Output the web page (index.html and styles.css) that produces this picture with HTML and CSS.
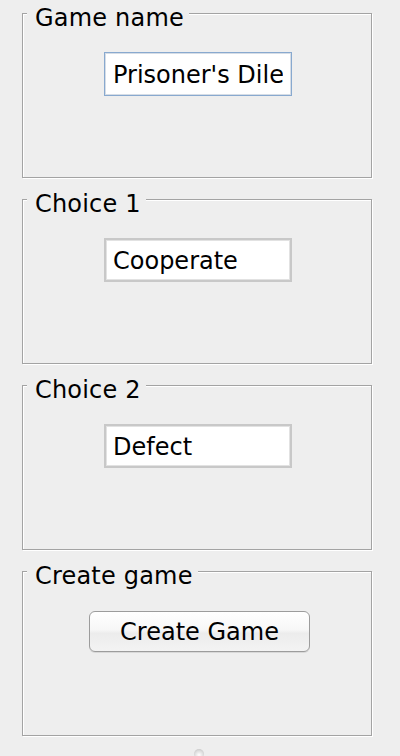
FILE: index.html
```html
<!DOCTYPE html>
<html>
<head>
<meta charset="utf-8">
<link rel="stylesheet" href="styles.css">
</head>
<body>
<div class="panel">
  <section class="group">
    <span class="title">Game name</span>
    <input class="field focused" type="text" value="Prisoner's Dilemma">
  </section>
  <section class="group">
    <span class="title">Choice 1</span>
    <input class="field" type="text" value="Cooperate">
  </section>
  <section class="group">
    <span class="title">Choice 2</span>
    <input class="field" type="text" value="Defect">
  </section>
  <section class="group">
    <span class="title">Create game</span>
    <button class="btn" type="button">Create Game</button>
  </section>
  <div class="grip"></div>
</div>
</body>
</html>
```
FILE: styles.css
```css
html, body {
  margin: 0;
  padding: 0;
  background: #eeeeee;
  height: 756px;
  overflow: hidden;
}
.panel {
  display: flex;
  flex-direction: column;
  padding: 13px 0 0 22px;
  gap: 21px;
  font-family: "DejaVu Sans", sans-serif;
  font-size: 24px;
  color: #000;
}
.group {
  position: relative;
  box-sizing: border-box;
  width: 350px;
  height: 165px;
  border: 1px solid #a3a3a3;
  box-shadow: inset 1px 1px 0 #ffffff, 1px 1px 0 #ffffff;
  display: flex;
  flex-direction: column;
  align-items: center;
  padding-top: 38px;
}
.title {
  position: absolute;
  left: 4px;
  top: -9px;
  padding: 0 5px 0 8px;
  background: #eeeeee;
  line-height: 26px;
  font-size: 24px;
  letter-spacing: 0.2px;
  white-space: nowrap;
}
.field {
  box-sizing: border-box;
  width: 188px;
  height: 44px;
  margin: 0 0 0 2px;
  padding: 2px 7px 0;
  border: 2px solid #c8c8c8;
  box-shadow: inset 0 0 0 1px #e2e2e2;
  background: #ffffff;
  font-family: "DejaVu Sans", sans-serif;
  font-size: 24px;
  color: #000;
  outline: none;
}
.field.focused {
  border: 1px solid #88a9cf;
  box-shadow: inset 0 0 0 1px #d6dde6;
  padding: 2px 8px 0;
}
.btn {
  box-sizing: border-box;
  width: 221px;
  height: 41px;
  margin: 1px 0 0 5px;
  border: 1px solid #9c9c9c;
  border-radius: 6px;
  background: linear-gradient(#ffffff 0%, #f7f7f7 45%, #ececec 55%, #f3f3f3 100%);
  box-shadow: 0 1px 0 #d8d8d8;
  font-family: "DejaVu Sans", sans-serif;
  font-size: 24px;
  color: #000;
  padding: 0;
}
.grip {
  align-self: center;
  width: 10px;
  height: 10px;
  margin: -8px 0 0 -24px;
  border-radius: 50%;
  background: radial-gradient(circle at 50% 60%, #ffffff 0%, #e0e0e0 50%, #b8b8b8 100%);
}
```
